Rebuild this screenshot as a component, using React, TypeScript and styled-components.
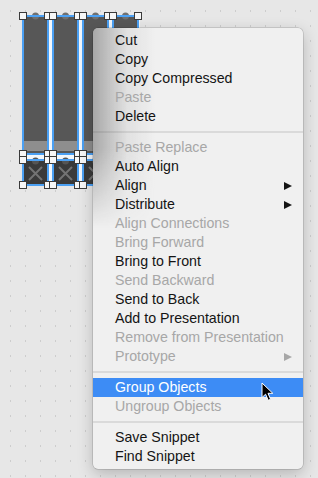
import React from 'react';
import styled, { createGlobalStyle } from 'styled-components';

const GlobalStyle = createGlobalStyle`
  html, body {
    margin: 0;
    padding: 0;
    background: #e7e7e7;
  }
  body {
    font-family: "Liberation Sans", Arial, sans-serif;
  }
`;

const Canvas = styled.div`
  position: relative;
  width: 318px;
  height: 478px;
  overflow: hidden;
  background-color: #e7e7e7;
  background-image: radial-gradient(circle, #b3b3b3 0.6px, transparent 0.9px);
  background-size: 15px 15px;
  background-position: 3px 3.5px;
`;

const Drawing = styled.svg`
  position: absolute;
  left: 0;
  top: 0;
`;

const Menu = styled.div`
  position: absolute;
  left: 93px;
  top: 28px;
  width: 210px;
  padding: 3px 0;
  background: #f0f0f0;
  border-radius: 5px;
  box-shadow: 0 0 0 0.5px rgba(0, 0, 0, 0.22), 0 5px 16px rgba(0, 0, 0, 0.22);
  overflow: hidden;

  /* blurred content shining through the left side */
  &::before {
    content: '';
    position: absolute;
    left: 0;
    top: 0;
    width: 62px;
    height: 200px;
    background: linear-gradient(to right, rgba(80, 80, 80, 0.45), rgba(140, 140, 140, 0.15) 55%, rgba(240, 240, 240, 0) 100%);
    -webkit-mask-image: linear-gradient(to bottom, #000 60%, transparent 100%);
    mask-image: linear-gradient(to bottom, #000 60%, transparent 100%);
    pointer-events: none;
  }
`;

const Item = styled.div<{ $disabled?: boolean; $active?: boolean }>`
  position: relative;
  display: flex;
  align-items: center;
  justify-content: space-between;
  height: 19px;
  line-height: 19px;
  padding: 0 11px 0 22px;
  font-size: 14.2px;
  white-space: nowrap;
  color: ${(p) => (p.$active ? '#ffffff' : p.$disabled ? '#a7a7a7' : '#141414')};
  background: ${(p) => (p.$active ? '#3d8cf5' : 'transparent')};
`;

const Arrow = styled.span`
  width: 0;
  height: 0;
  border-top: 4.5px solid transparent;
  border-bottom: 4.5px solid transparent;
  border-left: 8px solid currentColor;
`;

const Separator = styled.div`
  height: 12px;
  display: flex;
  align-items: center;

  &::after {
    content: '';
    flex: 1;
    height: 2px;
    background: #dadada;
  }
`;

const Cursor = styled.svg`
  position: absolute;
  left: 261px;
  top: 382px;
`;

type Entry =
  | { sep: true }
  | { label: string; disabled?: boolean; sub?: boolean; active?: boolean };

const entries: Entry[] = [
  { label: 'Cut' },
  { label: 'Copy' },
  { label: 'Copy Compressed' },
  { label: 'Paste', disabled: true },
  { label: 'Delete' },
  { sep: true },
  { label: 'Paste Replace', disabled: true },
  { label: 'Auto Align' },
  { label: 'Align', sub: true },
  { label: 'Distribute', sub: true },
  { label: 'Align Connections', disabled: true },
  { label: 'Bring Forward', disabled: true },
  { label: 'Bring to Front' },
  { label: 'Send Backward', disabled: true },
  { label: 'Send to Back' },
  { label: 'Add to Presentation' },
  { label: 'Remove from Presentation', disabled: true },
  { label: 'Prototype', disabled: true, sub: true },
  { sep: true },
  { label: 'Group Objects', active: true },
  { label: 'Ungroup Objects', disabled: true },
  { sep: true },
  { label: 'Save Snippet' },
  { label: 'Find Snippet' },
];

const cols = [0, 1, 2, 3].map((i) => 23 + 30 * i);
const COL_W = 25;
const TOP = 16;
const MID = 154;
const CELL = 160;
const BOTTOM = 185;

function Handle({ x, y }: { x: number; y: number }) {
  return <rect x={x - 3.5} y={y - 3.5} width={7} height={7} fill="#f7f7f7" stroke="#3a3a3a" strokeWidth={1} />;
}

function Selection() {
  return (
    <Drawing width={318} height={478}>
      <rect x={22} y={15} width={118} height={171} fill="#f3f7fb" />
      {cols.map((l) => {
        const r = l + COL_W;
        const c = (l + r) / 2;
        return (
          <g key={l}>
            <rect x={l} y={TOP} width={COL_W} height={MID - TOP} fill="#575757" />
            <rect x={l} y={141} width={COL_W} height={10} fill="#8e8e8e" />
            <circle cx={c} cy={TOP} r={3.5} fill="#707070" />
            <rect x={l} y={TOP} width={COL_W} height={MID - TOP} fill="none" stroke="#4ba0f3" strokeWidth={2} />
            <rect x={l} y={CELL} width={COL_W} height={BOTTOM - CELL} fill="#3a3a3a" />
            <circle cx={c} cy={CELL + 1} r={3.5} fill="#555555" />
            <path
              d={`M${l + 6} ${CELL + 7} L${r - 6} ${BOTTOM - 5} M${r - 6} ${CELL + 7} L${l + 6} ${BOTTOM - 5}`}
              stroke="#737373"
              strokeWidth={2}
            />
            <rect x={l} y={CELL} width={COL_W} height={BOTTOM - CELL} fill="none" stroke="#4ba0f3" strokeWidth={2} />
            {[TOP, MID, CELL, BOTTOM].map((y) => (
              <React.Fragment key={y}>
                <Handle x={l} y={y} />
                <Handle x={r} y={y} />
              </React.Fragment>
            ))}
          </g>
        );
      })}
    </Drawing>
  );
}

export default function App() {
  return (
    <>
      <GlobalStyle />
      <Canvas>
        <Selection />
        <Menu>
          {entries.map((e, i) =>
            'sep' in e ? (
              <Separator key={i} />
            ) : (
              <Item key={i} $disabled={e.disabled} $active={e.active}>
                <span>{e.label}</span>
                {e.sub && <Arrow />}
              </Item>
            ),
          )}
        </Menu>
        <Cursor width={14} height={20} viewBox="0 0 14 20">
          <path d="M1 1 L1 15.5 L4.6 12.2 L7.2 18.3 L9.6 17.3 L7 11.3 L11.8 11.3 Z" fill="#000" stroke="#fff" strokeWidth={1} strokeLinejoin="round" />
        </Cursor>
      </Canvas>
    </>
  );
}
